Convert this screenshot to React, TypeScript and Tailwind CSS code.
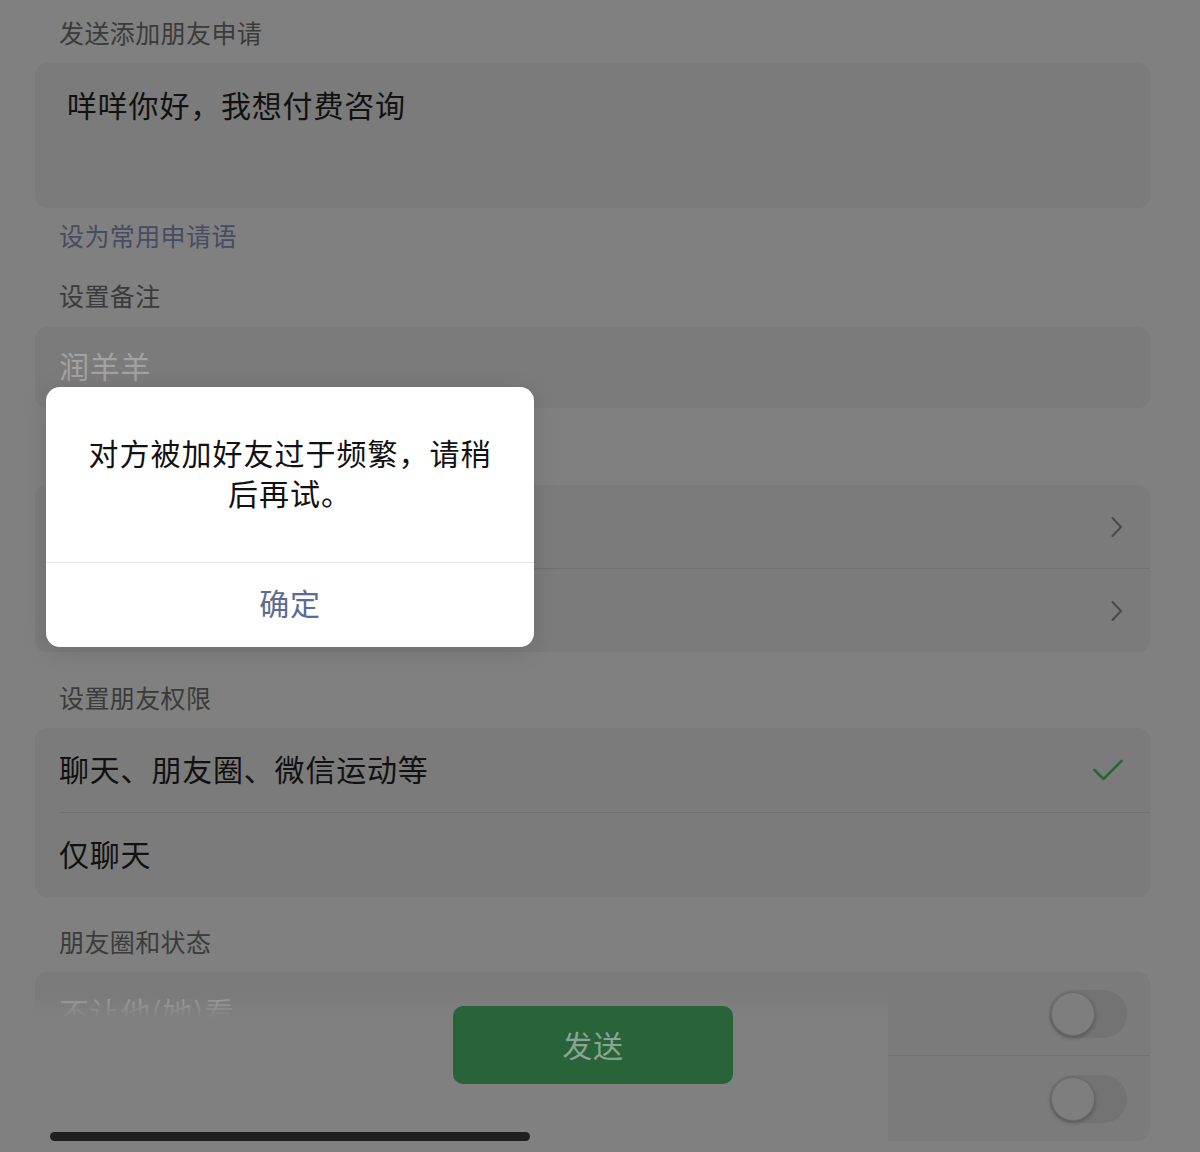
import React from "react";

const FONT = { fontFamily: '"Noto Sans CJK SC", "Noto Sans", sans-serif' };

function Label({ children, pt = "pt-[33px]", pb = "pb-[19px]", className = "text-[#3b3b3b]" }: { children?: React.ReactNode; pt?: string; pb?: string; className?: string }) {
  return <div className={`${pt} ${pb} h-[25px] box-content pl-[24px] text-[25px] leading-[25px] tracking-[0.4px] ${className}`}>{children}</div>;
}

function Chevron() {
  return (
    <svg width="12" height="20" viewBox="0 0 12 20" fill="none">
      <path d="M1.5 1 L10 10 L1.5 19" stroke="#4a4a4a" strokeWidth="2" strokeLinecap="round" strokeLinejoin="round" />
    </svg>
  );
}

function Toggle() {
  return (
    <div className="flex h-[48px] w-[78px] items-center rounded-full bg-[#737373] p-[2px]">
      <div className="h-[44px] w-[44px] rounded-full border border-[#6a6a6a] bg-[#7e7e7e] shadow-[0_2px_4px_rgba(0,0,0,0.25)]" />
    </div>
  );
}

function Divider() {
  return <div className="ml-[24px] h-px bg-[#717171]" />;
}

export default function App() {
  return (
    <div className="relative h-[1152px] w-[1200px] overflow-hidden bg-[#808080]" style={FONT}>
      <div className="pl-[35px] pr-[50px]">
        <Label pt="pt-[20px]" pb="pb-[18px]">发送添加朋友申请</Label>
        <div className="h-[145px] rounded-[12px] bg-[#7b7b7b] pl-[32px] pt-[26px] text-[30px] leading-[30px] tracking-[0.8px] text-[#111]">
          咩咩你好，我想付费咨询
        </div>

        <Label pt="pt-[15px]" pb="pb-[2px]" className="text-[#464c62]">设为常用申请语</Label>
        <Label pt="pt-[33px]" pb="pb-[19px]">设置备注</Label>
        <div className="flex h-[81px] items-center rounded-[12px] bg-[#7b7b7b] pb-[4px] pl-[24px] text-[30px] tracking-[0.8px] text-[#a2a2a2]">
          润羊羊
        </div>

        <Label />
        <div className="rounded-[12px] bg-[#7b7b7b]">
          <div className="flex h-[83px] items-center justify-end pr-[27px]">
            <Chevron />
          </div>
          <Divider />
          <div className="flex h-[83px] items-center justify-end pr-[27px]">
            <Chevron />
          </div>
        </div>

        <Label pb="pb-[18px]">设置朋友权限</Label>
        <div className="rounded-[12px] bg-[#7b7b7b]">
          <div className="flex h-[84px] items-center justify-between pl-[24px] pr-[27px] text-[30px] tracking-[0.8px] text-[#111]">
            <span className="pb-[4px]">聊天、朋友圈、微信运动等</span>
            <svg width="30" height="22" viewBox="0 0 30 22" fill="none">
              <path d="M1.5 11 L10.5 20 L28.5 2" stroke="#2b6639" strokeWidth="2.6" strokeLinecap="round" strokeLinejoin="round" />
            </svg>
          </div>
          <Divider />
          <div className="flex h-[84px] items-center pb-[4px] pl-[24px] text-[30px] tracking-[0.8px] text-[#111]">仅聊天</div>
        </div>

        <Label pt="pt-[32px]" pb="pb-[18px]">朋友圈和状态</Label>
        <div className="rounded-[12px] bg-[#7b7b7b]">
          <div className="flex h-[83px] items-center justify-between pl-[24px] pr-[23px] text-[30px] tracking-[0.8px] text-[#9e9e9e]">
            <span className="pb-[4px]">不让他(她)看</span>
            <Toggle />
          </div>
          <Divider />
          <div className="flex h-[85px] items-center justify-between pl-[24px] pr-[23px] text-[30px] tracking-[0.8px] text-[#9e9e9e]">
            <span className="pb-[4px]">不看他(她)</span>
            <Toggle />
          </div>
        </div>
      </div>

      {/* bottom bar over the list */}
      <div className="absolute bottom-0 left-0 top-[998px] w-[888px] bg-[linear-gradient(to_bottom,rgba(128,128,128,0.15),#808080_20px)]">
        <div className="ml-[453px] mt-[8px] flex h-[78px] w-[280px] items-center justify-center rounded-[10px] bg-[#28633a] pb-[2px] text-[30px] tracking-[0.8px] text-[#8aa592]">
          发送
        </div>
        <div className="ml-[50px] mt-[48px] h-[9px] w-[480px] rounded-full bg-[#1f1f1f]" />
      </div>

      {/* alert */}
      <div className="absolute left-[46px] top-[387px] w-[488px] overflow-hidden rounded-[14px] bg-white shadow-[0_4px_24px_rgba(0,0,0,0.12)]">
        <div className="px-[38px] pb-[50px] pt-[45px] text-center text-[30px] leading-[40px] tracking-[1px] text-[#111]">
          对方被加好友过于频繁，请稍后再试。
        </div>
        <div className="h-px bg-[#e6e6e6]" />
        <div className="flex h-[84px] items-center justify-center pb-[6px] text-[30px] tracking-[0.8px] text-[#5a6b95]">确定</div>
      </div>
    </div>
  );
}
